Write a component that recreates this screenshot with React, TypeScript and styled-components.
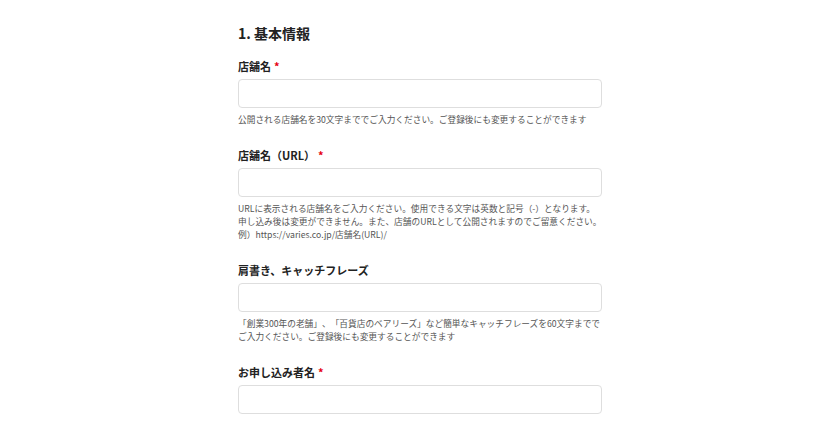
import styled, { createGlobalStyle } from "styled-components";

const GlobalStyle = createGlobalStyle`
  body {
    margin: 0;
    background: #fff;
    font-family: "Noto Sans CJK JP", "Noto Sans", sans-serif;
    color: #222;
  }
`;

type Field = {
  label: string;
  required?: boolean;
  help?: string[];
};

const fields: Field[] = [
  {
    label: "店舗名",
    required: true,
    help: ["公開される店舗名を30文字まででご入力ください。ご登録後にも変更することができます"],
  },
  {
    label: "店舗名（URL）",
    required: true,
    help: [
      "URLに表示される店舗名をご入力ください。使用できる文字は英数と記号（-）となります。",
      "申し込み後は変更ができません。また、店舗のURLとして公開されますのでご留意ください。",
      "例）https://varies.co.jp/店舗名(URL)/",
    ],
  },
  {
    label: "肩書き、キャッチフレーズ",
    help: [
      "「創業300年の老舗」、「百貨店のベアリーズ」など簡単なキャッチフレーズを60文字までで",
      "ご入力ください。ご登録後にも変更することができます",
    ],
  },
  {
    label: "お申し込み者名",
    required: true,
  },
];

function App() {
  return (
    <>
      <GlobalStyle />
      <Page>
        <Form>
          <Heading>1. 基本情報</Heading>
          {fields.map((f) => (
            <FieldBlock key={f.label}>
              <Label>
                {f.label}
                {f.required && <Required>*</Required>}
              </Label>
              <Input type="text" />
              {f.help && (
                <Help>
                  {f.help.map((line) => (
                    <div key={line}>{line}</div>
                  ))}
                </Help>
              )}
            </FieldBlock>
          ))}
        </Form>
      </Page>
    </>
  );
}

export default App;

const Page = styled.div`
  width: 840px;
  height: 430px;
  overflow: hidden;
  background: #fff;
`;

const Form = styled.div`
  width: 364px;
  margin: 0 auto;
  padding-top: 22px;
  display: flex;
  flex-direction: column;
`;

const Heading = styled.h2`
  margin: 0 0 12px;
  font-size: 14px;
  line-height: 22px;
  font-weight: 700;
  color: #222;
`;

const FieldBlock = styled.div`
  display: flex;
  flex-direction: column;
  margin-bottom: 19px;
`;

const Label = styled.div`
  font-size: 11px;
  line-height: 20px;
  font-weight: 700;
  color: #222;
  margin-bottom: 3px;
  text-spacing-trim: space-all;
`;

const Required = styled.span`
  color: #e60012;
  margin-left: 3px;
`;

const Input = styled.input`
  box-sizing: border-box;
  width: 100%;
  height: 29px;
  border: 1px solid #dedede;
  border-radius: 4px;
  background: #fff;
  outline: none;
  padding: 0 8px;
`;

const Help = styled.div`
  margin-top: 5px;
  font-size: 8.7px;
  line-height: 13px;
  color: #555;
  white-space: nowrap;
  text-spacing-trim: space-all;
`;
